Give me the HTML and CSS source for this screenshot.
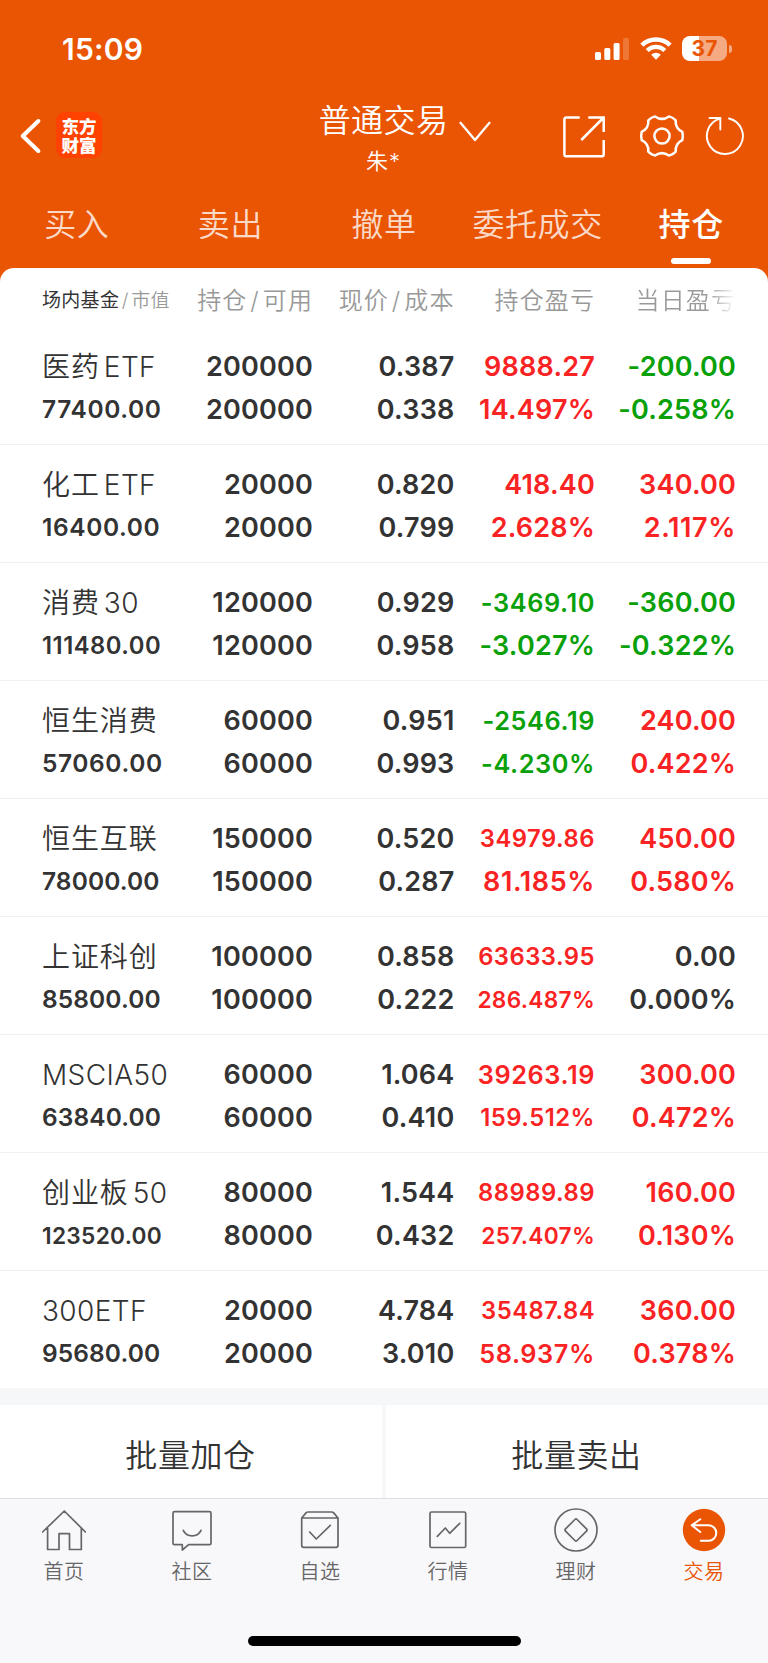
FILE: index.html
```
<!DOCTYPE html>
<html lang="zh-CN">
<head>
    <meta charset="UTF-8">
    <meta name="viewport" content="width=device-width, initial-scale=1.0">
    <title>普通交易 - 持仓</title>
    <link rel="stylesheet" href="styles.css">
</head>
<body>
    <header class="top">
        <div class="status">
            <span class="time">15:09</span>
            <div class="status-icons">
                <svg class="signal" width="35" height="26" viewBox="0 0 35 26" fill="#fff">
                    <rect x="0" y="16" width="6" height="8" rx="1.5"/>
                    <rect x="9.3" y="12" width="6" height="12" rx="1.5"/>
                    <rect x="18.6" y="7" width="6" height="17" rx="1.5"/>
                    <rect x="28" y="2" width="6" height="22" rx="1.5" opacity=".2"/>
                </svg>
                <svg class="wifi" width="32" height="26" viewBox="0 0 32 26" fill="none" stroke="#fff">
                    <path d="M1.9 9.2A20.3 20.3 0 0 1 30.1 9.2" stroke-width="4.5"/>
                    <path d="M7.2 14.6A12.4 12.4 0 0 1 24.8 14.6" stroke-width="4.2"/>
                    <path d="M11.2 18.8A6.8 6.8 0 0 1 20.8 18.8L16 23.7Z" fill="#fff" stroke="none"/>
                </svg>
                <div class="battery"><span>37</span></div>
                <i class="battery-tip"></i>
            </div>
        </div>
        <div class="bar">
            <div class="bar-left">
                <svg width="22" height="40" viewBox="0 0 22 40" fill="none" stroke="#fff" stroke-width="4" stroke-linecap="round" stroke-linejoin="round"><path d="M18.3 5L2.8 20L18.3 35"/></svg>
                <div class="logo">东方<br>财富</div>
            </div>
            <div class="account">
                <div class="account-type">普通交易</div>
                <div class="account-name">朱*</div>
            </div>
            <div class="bar-right">
                <svg class="ic-down" width="32" height="22" viewBox="0 0 32 22" fill="none" stroke="#fff" stroke-width="2.3" stroke-linecap="round" stroke-linejoin="round"><path d="M1.5 1.8L16 19L30.5 1.8"/></svg>
                <svg class="ic-share" width="44" height="44" viewBox="0 0 44 44" fill="none" stroke="#fff" stroke-width="2.5"><path d="M17.7 2.4H4.5Q2.4 2.4 2.4 4.5V39.2Q2.4 41.3 4.5 41.3H39.6Q41.7 41.3 41.7 39.2V25M26.3 2.4H41.7V17M41.2 3L19.3 25"/></svg>
                <svg class="ic-gear" width="46" height="46" viewBox="-23 -23 46 46" fill="none" stroke="#fff" stroke-width="2.5" stroke-linejoin="round"><path d="M20.3 4.2Q13 7.8 13.7 15.6Q11 18.6 7 19.6Q0 14.6 -7 19.6Q-11 18.6 -13.7 15.6Q-13 7.8 -20.3 4.2Q-21.4 0 -20.3 -4.2Q-13 -7.8 -13.7 -15.6Q-11 -18.6 -7 -19.6Q0 -14.6 7 -19.6Q11 -18.6 13.7 -15.6Q13 -7.8 20.3 -4.2Q21.4 0 20.3 4.2Z"/><circle r="7.6"/></svg>
                <svg class="ic-refresh" width="40" height="40" viewBox="-20 -20 40 40" fill="none" stroke="#fff" stroke-width="1.9" stroke-linecap="round"><path d="M4 -17.5A18 18 0 1 1 -5 -17.3M-15.5 -18H-4.7V-6.5"/></svg>
            </div>
        </div>
        <nav class="tabs">
            <a>买入</a>
            <a>卖出</a>
            <a>撤单</a>
            <a>委托成交</a>
            <a class="active">持仓</a>
        </nav>
    </header>

    <main class="sheet">
        <div class="row head">
            <div class="head-first"><b>场内基金</b><i>/</i>市值</div>
            <div>持仓<i>/</i>可用</div>
            <div>现价<i>/</i>成本</div>
            <div>持仓盈亏</div>
            <div class="fade">当日盈亏</div>
        </div>
        <div class="row">
            <div class="name">医药<em class="gap">ETF</em><span class="wide">77400.00</span></div>
            <div>200000<br>200000</div>
            <div>0.387<br>0.338</div>
            <div class="up">9888.27<br>14.497%</div>
            <div class="down">-200.00<br>-0.258%</div>
        </div>
        <div class="row">
            <div class="name">化工<em class="gap">ETF</em><span class="wide">16400.00</span></div>
            <div>20000<br>20000</div>
            <div>0.820<br>0.799</div>
            <div class="up">418.40<br>2.628%</div>
            <div class="up">340.00<br><span class="wide">2.117%</span></div>
        </div>
        <div class="row">
            <div class="name">消费<em class="gap">30</em><span class="m">111480.00</span></div>
            <div>120000<br>120000</div>
            <div>0.929<br>0.958</div>
            <div class="down"><span class="l">-3469.10</span><br>-3.027%</div>
            <div class="down">-360.00<br>-0.322%</div>
        </div>
        <div class="row">
            <div class="name">恒生消费<span class="wide">57060.00</span></div>
            <div>60000<br>60000</div>
            <div>0.951<br>0.993</div>
            <div class="down"><span class="l">-2546.19</span><br><span class="l">-4.230%</span></div>
            <div class="up">240.00<br>0.422%</div>
        </div>
        <div class="row">
            <div class="name">恒生互联<span>78000.00</span></div>
            <div>150000<br>150000</div>
            <div>0.520<br>0.287</div>
            <div class="up"><span class="m">34979.86</span><br><span class="wide">81.185%</span></div>
            <div class="up">450.00<br>0.580%</div>
        </div>
        <div class="row">
            <div class="name">上证科创<span>85800.00</span></div>
            <div>100000<br>100000</div>
            <div>0.858<br>0.222</div>
            <div class="up"><span class="m">63633.95</span><br><span class="s">286.487%</span></div>
            <div>0.00<br>0.000%</div>
        </div>
        <div class="row">
            <div class="name"><em>MSCIA50</em><span>63840.00</span></div>
            <div>60000<br>60000</div>
            <div>1.064<br>0.410</div>
            <div class="up"><span class="l">39263.19</span><br><span class="m">159.512%</span></div>
            <div class="up">300.00<br>0.472%</div>
        </div>
        <div class="row">
            <div class="name">创业板<em class="gap">50</em><span class="s">123520.00</span></div>
            <div>80000<br>80000</div>
            <div>1.544<br>0.432</div>
            <div class="up"><span class="m">88989.89</span><br><span class="s">257.407%</span></div>
            <div class="up">160.00<br>0.130%</div>
        </div>
        <div class="row">
            <div class="name"><em>300ETF</em><span>95680.00</span></div>
            <div>20000<br>20000</div>
            <div>4.784<br>3.010</div>
            <div class="up"><span class="m">35487.84</span><br><span class="l">58.937%</span></div>
            <div class="up">360.00<br>0.378%</div>
        </div>
    </main>

    <div class="batch">
        <a>批量加仓</a>
        <a>批量卖出</a>
    </div>

    <footer class="tabbar">
        <div class="tabbar-items">
            <a>
                <svg viewBox="0 0 44 44"><path d="M.6 24L22.3 3L43.4 24M5.6 20V41.5H17V25.7H27.5V41.5H39.3V20"/></svg>
                首页
            </a>
            <a>
                <svg viewBox="0 0 44 44"><path d="M4.5 3.7H39.5Q41 3.7 41 5.2V35.2Q41 36.7 39.5 36.7H18.6L12.3 42V36.7H4.5Q3 36.7 3 35.2V5.2Q3 3.7 4.5 3.7ZM13.3 22.3C16.5 29.6 27.8 29.6 31 22.3"/></svg>
                社区
            </a>
            <a>
                <svg viewBox="0 0 44 44"><path d="M3.7 10H40V37.3Q40 39.3 38 39.3H5.7Q3.7 39.3 3.7 37.3V10L8 4.9Q8.8 4 10 4H33.7Q34.9 4 35.7 4.9L40 10M11.7 24L18.3 31L32.3 17.3"/></svg>
                自选
            </a>
            <a>
                <svg viewBox="0 0 44 44"><rect x="4" y="4" width="35.7" height="35.5" rx="1.5"/><path d="M11.3 28.3L19.3 20L23.7 25.3L33.7 15.3"/></svg>
                行情
            </a>
            <a>
                <svg viewBox="0 0 44 44"><circle cx="22" cy="22" r="21"/><path d="M20.9 11.5Q22 10.4 23.1 11.5L32.5 20.9Q33.6 22 32.5 23.1L23.1 32.5Q22 33.6 20.9 32.5L11.5 23.1Q10.4 22 11.5 20.9Z"/></svg>
                理财
            </a>
            <a class="active">
                <svg viewBox="0 0 44 44"><circle cx="22" cy="22" r="21.2"/><path d="M18.3 11.3L9.7 17.3L18.3 24M10 17.3H26.6A7.7 7.7 0 0 1 26.6 32.7H18.7"/></svg>
                交易
            </a>
        </div>
        <div class="home-indicator"></div>
    </footer>
</body>
</html>
```
FILE: styles.css
```
* {
    box-sizing: border-box;
}
body {
    margin: 0;
    background: #ea5504;
    color: #333;
    font-family: Inter, "Noto Sans CJK SC", sans-serif;
}
svg {
    display: block;
    flex: none;
}
i, em {
    font-style: normal;
}

/* orange header */
.top {
    height: 268px;
    color: #fff;
}
.status {
    display: flex;
    justify-content: space-between;
    height: 98px;
    padding: 36px 36px 0 62px;
}
.time {
    font-size: 30px;
    font-weight: 560;
    letter-spacing: 0.2px;
    line-height: 26px;
}
.status-icons {
    display: flex;
    height: 26px;
}
.wifi {
    margin-left: 10px;
}
.battery {
    width: 45px;
    height: 25px;
    margin-left: 10px;
    border-radius: 8px;
    background: linear-gradient(90deg, #fff 17px, rgba(255,255,255,0.5) 17px);
    color: #ea5504;
    font-size: 21px;
    font-weight: 700;
    line-height: 26px;
    text-align: center;
}
.battery-tip {
    width: 3px;
    height: 8px;
    margin: 9px 0 0 2px;
    border-radius: 0 4px 4px 0;
    background: rgba(255,255,255,0.5);
}
.bar {
    display: flex;
    height: 90px;
}
.bar-left, .bar-right {
    display: flex;
}
.bar-left {
    width: 318px;
    padding: 14px 0 0 20px;
}
.bar-left svg {
    margin-top: 4px;
}
.logo {
    width: 46px;
    height: 46px;
    margin-left: 14px;
    padding-top: 5px;
    border-radius: 9px;
    background: #ff4200;
    font-size: 17.5px;
    font-weight: 900;
    line-height: 19px;
    text-align: center;
}
.account {
    width: 131px;
    padding-top: 2px;
    font-weight: 350;
    text-align: center;
}
.account-type {
    height: 42px;
    font-size: 32px;
    letter-spacing: 0.4px;
    line-height: 42px;
}
.account-name {
    font-size: 22px;
    letter-spacing: 1px;
    line-height: 38px;
}
.ic-down {
    margin: 23px 0 0 10px;
}
.ic-share {
    margin: 17px 0 0 71px;
}
.ic-gear {
    margin: 15px 0 0 33px;
}
.ic-refresh {
    margin: 18px 0 0 20px;
}
.tabs {
    display: flex;
    height: 80px;
}
.tabs a {
    width: 153.6px;
    height: 76px;
    color: rgba(255,255,255,0.8);
    font-size: 32px;
    font-weight: 350;
    letter-spacing: 0.6px;
    line-height: 74px;
    text-align: center;
}
.tabs .active {
    color: #fff;
    font-weight: 500;
}
.tabs .active::after {
    content: "";
    display: block;
    width: 40px;
    height: 6px;
    margin: -4px auto 0;
    border-radius: 3px;
    background: #fff;
}

/* holdings list */
.sheet {
    border-radius: 14px 14px 0 0;
    background: #fff;
}
.row {
    display: grid;
    grid-template-columns: 138px 133px 141.5px 140.5px 141px;
    height: 118px;
    padding: 18px 32px 0 42px;
    border-bottom: 1px solid #f1f1f3;
    font-size: 27px;
    font-weight: 560;
    letter-spacing: 0.2px;
    line-height: 43px;
    text-align: right;
    white-space: nowrap;
}
.row:last-child {
    height: 117px;
    border-bottom: none;
}
.head {
    height: 59px;
    padding-top: 11px;
    border: none;
    color: #999;
    font-size: 24px;
    font-weight: 350;
    letter-spacing: 1.1px;
}
.head i {
    margin: 0 3px;
}
.head-first {
    font-size: 19px;
    letter-spacing: 0.3px;
    text-align: left;
}
.head-first i {
    margin: 0 2.5px;
}
.head b {
    color: #333;
    font-weight: 400;
}
.fade {
    background: linear-gradient(90deg, #999 112px, #fff 141px);
    background-clip: text;
    color: transparent;
}
.name {
    padding-top: 1px;
    font-size: 28px;
    font-weight: 350;
    letter-spacing: 0.9px;
    text-align: left;
}
.name em {
    letter-spacing: 0.4px;
}
.name .gap {
    margin-left: 4px;
}
.name span {
    display: block;
    margin-top: -1px;
    font-size: 24.5px;
    font-weight: 560;
    letter-spacing: 0.1px;
}
.l {
    font-size: 25.3px;
    letter-spacing: 0.6px;
}
.m, .name .m {
    font-size: 23.8px;
    letter-spacing: 0.5px;
    vertical-align: 1px;
}
.s, .name .s {
    font-size: 22.7px;
    letter-spacing: 0.3px;
    vertical-align: 1px;
}
.wide, .name .wide {
    letter-spacing: 0.6px;
}
.up {
    color: #fa2323;
}
.down {
    color: #09a009;
}

.batch {
    display: flex;
    gap: 4px;
    padding-top: 17px;
    background: #f6f7f9;
}
.batch a {
    flex: 1;
    height: 93px;
    padding-right: 1px;
    background: #fff;
    font-size: 32px;
    font-weight: 350;
    letter-spacing: 0.6px;
    line-height: 101px;
    text-align: center;
}

/* bottom navigation */
.tabbar {
    height: 165px;
    border-top: 1px solid #dcdfe4;
    background: #f8f8fb;
}
.tabbar-items {
    display: flex;
    height: 137px;
    padding-top: 9px;
}
.tabbar-items a {
    flex: 1;
    color: #666;
    font-size: 20px;
    font-weight: 350;
    letter-spacing: 0.4px;
    line-height: 40px;
    text-align: center;
}
.tabbar svg {
    width: 44px;
    height: 44px;
    margin: 0 auto;
    fill: none;
    stroke: #666;
    stroke-width: 1.7;
    stroke-linecap: round;
    stroke-linejoin: round;
}
.tabbar .active {
    color: #ea5504;
}
.tabbar .active circle {
    fill: #ea5504;
    stroke: none;
}
.tabbar .active path {
    stroke: #fff;
    stroke-width: 2;
}
.home-indicator {
    width: 273px;
    height: 10px;
    margin: 0 auto;
    border-radius: 5px;
    background: #000;
}
```
